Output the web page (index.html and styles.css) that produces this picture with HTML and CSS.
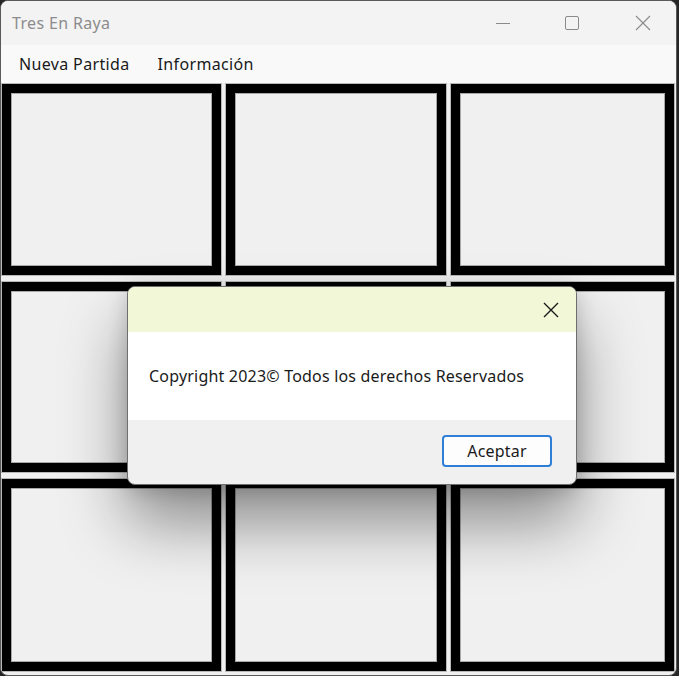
FILE: index.html
```html
<!DOCTYPE html>
<html lang="es">
<head>
<meta charset="utf-8">
<title>Tres En Raya</title>
<link rel="stylesheet" href="styles.css">
</head>
<body>
<div class="window">
  <div class="titlebar">
    <span class="title">Tres En Raya</span>
    <div class="controls">
      <span class="ctl min"><svg width="16" height="16" viewBox="0 0 16 16"><path d="M1 8.5H15" stroke="#8a8a8a" stroke-width="1"/></svg></span>
      <span class="ctl max"><svg width="16" height="16" viewBox="0 0 16 16"><rect x="1.5" y="1.5" width="13" height="13" rx="1.5" fill="none" stroke="#8a8a8a" stroke-width="1"/></svg></span>
      <span class="ctl"><svg width="16" height="16" viewBox="0 0 16 16"><path d="M1 1L15 15M15 1L1 15" stroke="#8a8a8a" stroke-width="1.1"/></svg></span>
    </div>
  </div>
  <div class="menubar">
    <span class="menu-item">Nueva Partida</span>
    <span class="menu-item">Información</span>
  </div>
  <div class="board">
    <div class="cell"></div><div class="cell"></div><div class="cell"></div>
    <div class="cell"></div><div class="cell"></div><div class="cell"></div>
    <div class="cell"></div><div class="cell"></div><div class="cell"></div>
  </div>
  <div class="dialog">
    <div class="dlg-head">
      <span class="dlg-close"><svg width="18" height="18" viewBox="0 0 18 18"><path d="M2 2L16 16M16 2L2 16" stroke="#1a1a1a" stroke-width="1.4"/></svg></span>
    </div>
    <div class="dlg-body">Copyright 2023© Todos los derechos Reservados</div>
    <div class="dlg-foot">
      <button class="btn">Aceptar</button>
    </div>
  </div>
</div>
</body>
</html>
```
FILE: styles.css
```css
html, body {
  margin: 0;
  padding: 0;
  background: #262626;
  width: 679px;
  height: 676px;
  overflow: hidden;
}
.window {
  position: relative;
  width: 675px;
  height: 674px;
  background: #f0f0f0;
  border: 1px solid #5a5a5a;
  border-radius: 8px;
  overflow: hidden;
  font-family: "Noto Sans", "Open Sans", sans-serif;
}
.titlebar {
  height: 44px;
  background: #f3f3f3;
  display: flex;
  align-items: center;
  justify-content: space-between;
}
.title {
  margin-left: 11px;
  font-size: 16px;
  letter-spacing: 0.35px;
  color: #8c8c8c;
}
.controls {
  display: flex;
  align-items: center;
  margin-right: 25px;
}
.ctl {
  display: flex;
}
.min {
  margin-right: 53px;
}
.max {
  margin-right: 55px;
}
.menubar {
  height: 38px;
  background: #f9f9f9;
  display: flex;
  align-items: center;
  padding-left: 18px;
  gap: 28px;
}
.menu-item {
  font-size: 16px;
  letter-spacing: 0.35px;
  color: #1a1a1a;
}
.board {
  display: grid;
  grid-template-columns: 219px 220px 223px;
  grid-template-rows: 191px 190px 192px;
  column-gap: 5px;
  row-gap: 7px;
  padding: 1px 0 0 1px;
}
.cell {
  box-sizing: border-box;
  border: 9px solid #000;
  background: #f0f0f0;
  box-shadow: 0 0 0 1px #b8b8b8, inset 0 0 0 1px #a8a8a8;
}
.dialog {
  position: absolute;
  left: 126px;
  top: 285px;
  width: 448px;
  height: 197px;
  border: 1px solid #6e6e6e;
  border-radius: 8px;
  overflow: hidden;
  display: flex;
  flex-direction: column;
  background: #f0f0f0;
  box-shadow: 0 38px 64px rgba(0, 0, 0, 0.42), 0 4px 20px rgba(0, 0, 0, 0.18);
}
.dlg-head {
  height: 45px;
  background: #f2f7d7;
  display: flex;
  justify-content: flex-end;
  align-items: center;
}
.dlg-close {
  display: flex;
  margin-right: 16px;
}
.dlg-body {
  height: 88px;
  background: #fff;
  box-sizing: border-box;
  padding: 34px 0 0 21px;
  font-size: 16px;
  letter-spacing: 0.2px;
  color: #1a1a1a;
  line-height: 20px;
}
.dlg-foot {
  flex: 1;
  display: flex;
  justify-content: flex-end;
  align-items: flex-start;
  padding: 15px 24px 0 0;
}
.btn {
  width: 110px;
  height: 32px;
  background: #fdfdfd;
  border: 2px solid #2f7ed8;
  border-radius: 4px;
  font-family: "Noto Sans", "Open Sans", sans-serif;
  font-size: 16px;
  letter-spacing: 0.2px;
  color: #1a1a1a;
  padding: 0;
}
```
